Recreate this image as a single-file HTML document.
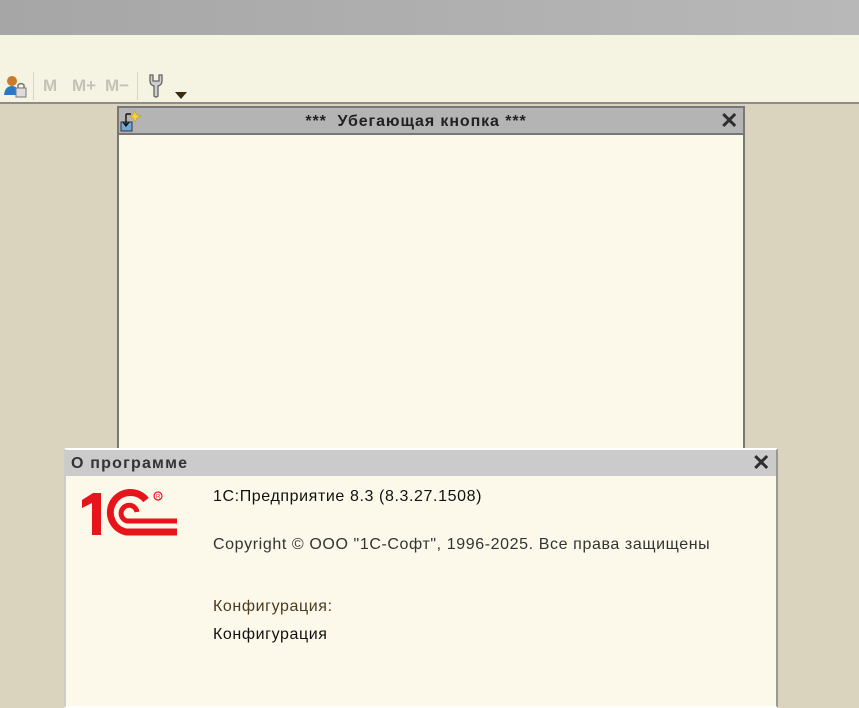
<!DOCTYPE html>
<html><head><meta charset="utf-8"><style>
*{margin:0;padding:0;box-sizing:border-box}
body{width:859px;height:687px;overflow:hidden;background:#dad4bf;font-family:"Liberation Sans",Arial,sans-serif;position:relative}
.top{position:absolute;left:0;top:0;width:859px;height:35px;background:linear-gradient(90deg,#a6a6a6,#b8b8b8)}
.tb{position:absolute;left:0;top:35px;width:859px;height:69px;background:#f5f3e2;border-bottom:2px solid #8c8c8c}
.m{position:absolute;top:76px;font-size:17px;font-weight:bold;color:#c4c2b8}
.sep{position:absolute;top:72px;width:1px;height:28px;background:#d8d4c0}
.w1{position:absolute;left:117px;top:106px;width:628px;height:600px;background:#fcf9eb;border:2px solid #777}
.w1 .t{height:27px;background:#b4b4b4;border-bottom:2px solid #777;text-align:center;font-weight:bold;font-size:16px;letter-spacing:0.9px;line-height:27px;color:#222;padding-right:30px}
.w2{position:absolute;left:64px;top:448px;width:714px;height:260px;background:#fcf9eb;border:2px solid #fff;border-right-color:#999;border-left-color:#ccc}
.w2 .t{height:26px;background:#cbcbcb;font-size:16px;font-weight:bold;letter-spacing:1.2px;line-height:28px;color:#333;padding-left:5px}
.x{position:absolute;font-size:22px;font-weight:bold;color:#2e2e2e}
.txt{position:absolute;font-size:16px;letter-spacing:0.6px;color:#111}
</style></head><body>
<div class="top"></div>
<div class="tb"></div>
<svg style="position:absolute;left:3px;top:74px" width="24" height="24"><circle cx="9" cy="7" r="5" fill="#c97a2a"/><path d="M1 21 Q2 12 9 12 Q14 12 15 17 L15 21Z" fill="#2a78c8"/><rect x="13" y="14" width="10" height="9" fill="#ddd" stroke="#777"/><path d="M15 14 V11 Q18 8 21 11 V14" fill="none" stroke="#777" stroke-width="1.5"/></svg>
<div class="sep" style="left:33px"></div>
<div class="m" style="left:43px">M</div>
<div class="m" style="left:72px">M+</div>
<div class="m" style="left:105px">M−</div>
<div class="sep" style="left:137px"></div>
<svg style="position:absolute;left:147px;top:73px" width="18" height="26"><path d="M3 2 V8 Q3 12 7 13 V23 Q9 25 11 23 V13 Q15 12 15 8 V2 L12 2 V8 H6 V2Z" fill="#cfcfcf" stroke="#666" stroke-width="1.3"/></svg>
<svg style="position:absolute;left:175px;top:92px" width="12" height="7"><path d="M0 0 H12 L6 7Z" fill="#3a2c10"/></svg>
<div class="w1"><div class="t">***&nbsp; Убегающая кнопка ***</div></div>
<svg style="position:absolute;left:120px;top:110px" width="24" height="24"><path d="M14 1 L17 5 L21 6 L17 8 L15 12 L13 8 L10 6 L13 5Z" fill="#f3d23a" stroke="#c9a020" stroke-width=".7"/><rect x="1" y="12" width="11" height="9" fill="#6fa8d8" stroke="#333"/><path d="M6 4 V15 M3 12 L6 16 L9 12 M6 4 H11" stroke="#111" stroke-width="1.4" fill="none"/></svg>
<div class="x" style="left:720px;top:108px">✕</div>
<div class="w2"><div class="t">О программе</div></div>
<div class="x" style="left:752px;top:450px">✕</div>
<svg style="position:absolute;left:0;top:0" width="200" height="560">
<g fill="#e8141b"><path d="M82 500 L93 493 H101 V535 H92 V503 L82 508Z"/></g>
<g fill="none" stroke="#e8141b">
<path d="M146 500 A20 20 0 1 0 126 532 H177" stroke-width="7"/>
<path d="M137 512 A8 8 0 1 0 127 521 H177" stroke-width="5"/>
</g>
<circle cx="158" cy="496" r="4" fill="none" stroke="#e8141b" stroke-width="1.2"/>
<text x="156" y="498.5" font-size="6" fill="#e8141b" font-family="Liberation Sans">R</text>
</svg>
<div class="txt" style="left:213px;top:488px">1С:Предприятие 8.3 (8.3.27.1508)</div>
<div class="txt" style="left:213px;top:536px;color:#333">Copyright © ООО "1С-Софт", 1996-2025. Все права защищены</div>
<div class="txt" style="left:213px;top:598px;color:#4a3a20">Конфигурация:</div>
<div class="txt" style="left:213px;top:626px">Конфигурация</div>
</body></html>
